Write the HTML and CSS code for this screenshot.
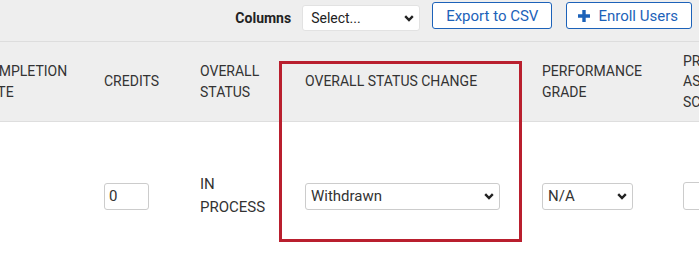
FILE: index.html
```html
<!DOCTYPE html>
<html>
<head>
	<meta charset="utf-8">
	<title>Course roster</title>
	<link rel="stylesheet" href="styles.css">
</head>
<body>
	<div class="page">
		<!-- top toolbar -->
		<div class="toolbar">
			<label class="cols-label" for="cols">Columns</label>
			<span class="pick pick-cols">
				<select id="cols"><option>Select...</option></select>
				<svg class="chev" width="10" height="7" viewBox="0 0 10 7"><path d="M1.2 1.2 L5 5 L8.8 1.2" fill="none" stroke="#222" stroke-width="2.4"/></svg>
			</span>
			<button type="button" class="btn">Export to CSV</button>
			<button type="button" class="btn">
				<svg class="plus" width="12" height="12" viewBox="0 0 12 12"><path d="M6 0 V12 M0 6 H12" stroke="#1c62b9" stroke-width="3.4"/></svg>
				Enroll Users
			</button>
		</div>
		<!-- roster table -->
		<div class="scroller">
			<table class="roster">
				<colgroup>
					<col style="width:124px">
					<col style="width:96px">
					<col style="width:105px">
					<col style="width:237px">
					<col style="width:141px">
					<col style="width:120px">
				</colgroup>
				<thead>
					<tr>
						<th>Completion date</th>
						<th>Credits</th>
						<th>Overall status</th>
						<th>Overall status change</th>
						<th>Performance grade</th>
						<th>Pre assessment score</th>
					</tr>
				</thead>
				<tbody>
					<tr>
						<td></td>
						<td><input class="num" type="text" value="0"></td>
						<td class="status">IN<br>PROCESS</td>
						<td>
							<span class="pick pick-change">
								<select><option>Withdrawn</option></select>
								<svg class="chev" width="10" height="7" viewBox="0 0 10 7"><path d="M1.2 1.2 L5 5 L8.8 1.2" fill="none" stroke="#222" stroke-width="2.4"/></svg>
							</span>
						</td>
						<td>
							<span class="pick pick-grade">
								<select><option>N/A</option></select>
								<svg class="chev" width="10" height="7" viewBox="0 0 10 7"><path d="M1.2 1.2 L5 5 L8.8 1.2" fill="none" stroke="#222" stroke-width="2.4"/></svg>
							</span>
						</td>
						<td><input class="num num-wide" type="text" value=""></td>
					</tr>
				</tbody>
			</table>
		</div>
		<!-- highlight round the status change column -->
		<div class="highlight"></div>
	</div>
</body>
</html>
```

FILE: styles.css
```css
body {
	margin: 0;
	font-family: Roboto, "Liberation Sans", sans-serif;
	color: #333;
	background: #fff;
}
.page {
	position: relative;
	width: 699px;
	height: 274px;
	overflow: hidden;
}
.toolbar {
	display: flex;
	justify-content: flex-end;
	align-items: flex-start;
	height: 42px;
	box-sizing: border-box;
	padding: 2px 7px 0 0;
	background: #eee;
	border-bottom: 1px solid #ddd;
}
.cols-label {
	font-size: 14px;
	font-weight: bold;
	color: #222;
	margin: 8px 11px 0 0;
}
.pick {
	position: relative;
	display: inline-block;
}
.pick select {
	-webkit-appearance: none;
	appearance: none;
	display: block;
	box-sizing: border-box;
	height: 27px;
	padding: 0 24px 0 5px;
	font-family: Roboto, "Liberation Sans", sans-serif;
	font-size: 15px;
	color: #333;
	background: #fff;
	border: 1px solid #ccc;
	border-radius: 3px;
}
.pick .chev {
	position: absolute;
	right: 6px;
	top: 10px;
	pointer-events: none;
}
.pick-cols {
	margin: 3px 12px 0 0;
}
.pick-cols select {
	width: 118px;
	height: 26px;
	padding-left: 8px;
	font-size: 14px;
	border-color: #e2e2e2;
	color: #222;
}
.btn {
	display: flex;
	align-items: center;
	gap: 8px;
	box-sizing: border-box;
	height: 27px;
	padding: 0 13px;
	font-family: Roboto, "Liberation Sans", sans-serif;
	font-size: 15px;
	color: #1c62b9;
	background: #fff;
	border: 1px solid #1c62b9;
	border-radius: 3px;
}
.btn + .btn {
	margin-left: 14px;
	padding: 0 13px 0 11px;
}
.scroller {
	overflow: hidden;
}
.roster {
	table-layout: fixed;
	border-collapse: collapse;
	width: 823px;
	margin-left: -32px;
}
.roster th {
	height: 79px;
	padding: 0 12px;
	background: #eee;
	border-bottom: 1px solid #dedede;
	text-align: left;
	vertical-align: middle;
	font-size: 14px;
	font-weight: 400;
	line-height: 20.5px;
	text-transform: uppercase;
	color: #333;
}
.roster td {
	height: 148px;
	padding: 0 12px;
	vertical-align: middle;
	font-size: 15px;
	line-height: 23px;
}
.status {
	color: #333;
}
.num {
	display: block;
	box-sizing: border-box;
	width: 45px;
	height: 27px;
	padding: 0 4px;
	font-family: Roboto, "Liberation Sans", sans-serif;
	font-size: 15px;
	color: #333;
	border: 1px solid #ccc;
	border-radius: 3px;
}
.num-wide {
	width: 60px;
	height: 28px;
}
.pick-change select {
	width: 195px;
}
.pick-grade select {
	width: 91px;
}
.highlight {
	position: absolute;
	left: 279px;
	top: 61px;
	width: 243px;
	height: 181px;
	box-sizing: border-box;
	border: 3px solid #b91f2e;
}
```
